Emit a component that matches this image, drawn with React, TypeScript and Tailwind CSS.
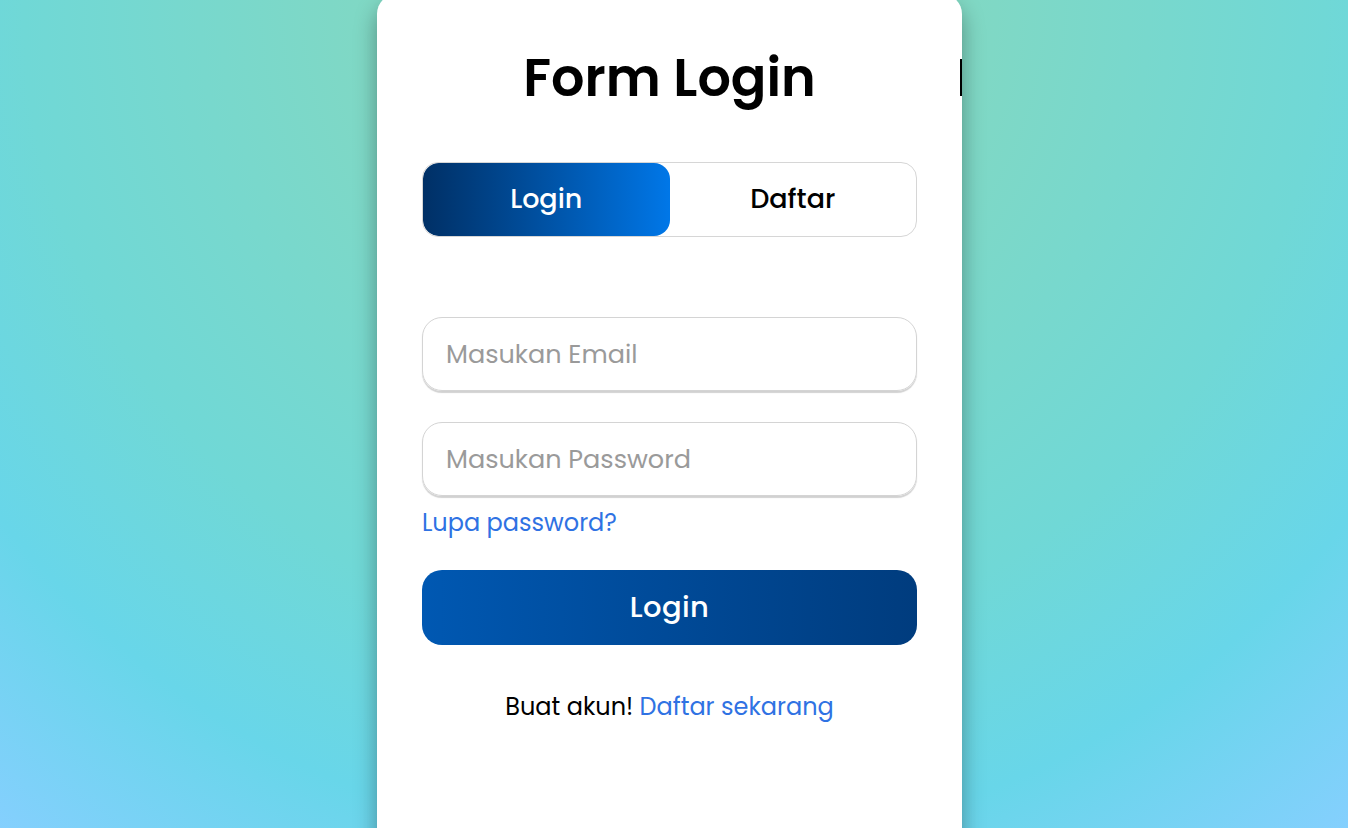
import { useState } from 'react';

const FONT = "font-['Poppins','Inter','Noto_Sans',sans-serif]";

export default function App() {
  const [tab, setTab] = useState<'login' | 'daftar'>('login');
  const [email, setEmail] = useState('');
  const [password, setPassword] = useState('');

  return (
    <div
      className={`h-screen w-full overflow-hidden flex justify-center pr-[9px] ${FONT} bg-[radial-gradient(circle_at_50%_0%,#98d5a6_0px,#80d8c4_300px,#70d8d6_650px,#68d6e9_850px,#86cfff_1080px)]`}
    >
      <div className="relative -mt-[6px] w-[585px] h-[900px] shrink-0 rounded-[20px] bg-white px-[45px] pt-[54px] shadow-[0_12px_22px_rgba(0,0,0,0.35)]">
        <div className="absolute left-[583px] top-[65px] w-[2px] h-[37px] bg-black" />

        <h1 className="h-[60px] leading-[60px] text-center text-[52.5px] font-semibold text-black">
          Form Login
        </h1>

        {/* Login / Daftar switch */}
        <div className="mt-[54px] h-[75px] flex rounded-[16px] border border-[#d6d6d6] overflow-hidden">
          <button
            onClick={() => setTab('login')}
            className={`flex-1 rounded-[16px] text-[27px] font-medium ${
              tab === 'login' ? 'text-white bg-gradient-to-r from-[#003066] to-[#0077e8]' : 'text-black'
            }`}
          >
            Login
          </button>
          <button
            onClick={() => setTab('daftar')}
            className={`flex-1 rounded-[16px] text-[27px] font-medium ${
              tab === 'daftar' ? 'text-white bg-gradient-to-r from-[#003066] to-[#0077e8]' : 'text-black'
            }`}
          >
            Daftar
          </button>
        </div>

        {/* Fields */}
        <input
          value={email}
          onChange={(e) => setEmail(e.target.value)}
          placeholder="Masukan Email"
          className="mt-[80px] block w-full h-[74px] rounded-[20px] border border-[#d4d4d4] px-[23px] text-[25.5px] outline-none shadow-[0_2px_1px_rgba(0,0,0,0.18)] placeholder-[#9a9a9a]"
        />
        <input
          type="password"
          value={password}
          onChange={(e) => setPassword(e.target.value)}
          placeholder="Masukan Password"
          className="mt-[31px] block w-full h-[74px] rounded-[20px] border border-[#d4d4d4] px-[23px] text-[25.5px] outline-none shadow-[0_2px_1px_rgba(0,0,0,0.18)] placeholder-[#9a9a9a]"
        />

        <a href="#" className="mt-[12px] block h-[30px] leading-[30px] text-[24px] text-[#2f72e3]">
          Lupa password?
        </a>

        <button className="mt-[32px] w-full h-[75px] rounded-[20px] text-white text-[29px] font-medium tracking-[0.4px] bg-gradient-to-r from-[#0058b2] to-[#003c7e]">
          Login
        </button>

        <p className="mt-[47px] h-[30px] leading-[30px] text-center text-[24px] text-black">
          Buat akun! <a href="#" className="text-[#2f72e3]">Daftar sekarang</a>
        </p>
      </div>
    </div>
  );
}
